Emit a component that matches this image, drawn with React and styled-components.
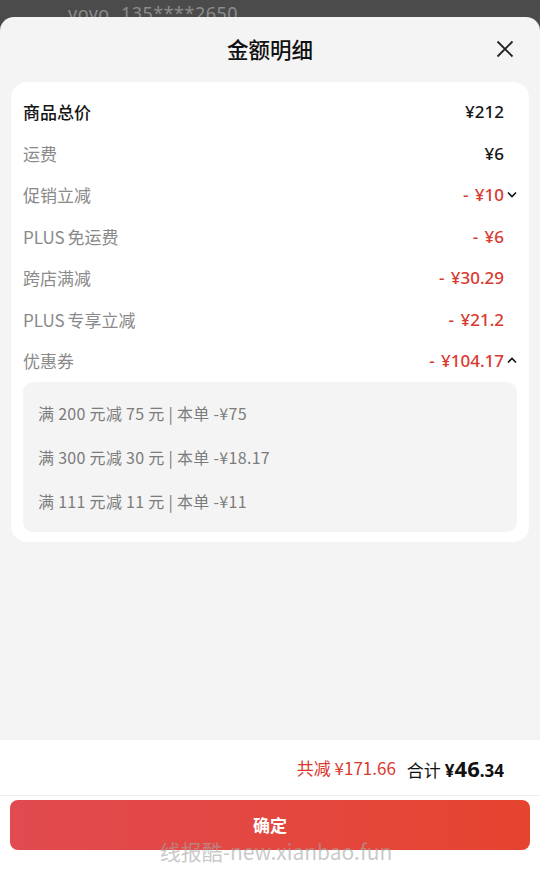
import React from "react";
import styled, { createGlobalStyle } from "styled-components";

const GlobalStyle = createGlobalStyle`
  html, body {
    margin: 0;
    padding: 0;
    background: #4b4b4b;
  }
  body {
    font-family: "Noto Sans", "Noto Sans CJK SC", sans-serif;
  }
`;

const RED = "#d83a2f";

const rows = [
  { label: "商品总价", value: "¥212", strong: true },
  { label: "运费", value: "¥6" },
  { label: "促销立减", value: "- ¥10", red: true, arrow: "down" },
  { label: "PLUS 免运费", value: "- ¥6", red: true },
  { label: "跨店满减", value: "- ¥30.29", red: true },
  { label: "PLUS 专享立减", value: "- ¥21.2", red: true },
  { label: "优惠券", value: "- ¥104.17", red: true, arrow: "up" },
];

const coupons = [
  "满 200 元减 75 元 | 本单 -¥75",
  "满 300 元减 30 元 | 本单 -¥18.17",
  "满 111 元减 11 元 | 本单 -¥11",
];

const Page = styled.div`
  height: 894px;
  display: flex;
  flex-direction: column;
  overflow: hidden;
`;

const Backdrop = styled.div`
  height: 17px;
  flex: 0 0 17px;
  overflow: hidden;
  padding: 2px 0 0 68px;
  box-sizing: border-box;
  color: #8c8c8c;
  font-size: 18px;
  line-height: 22px;
  letter-spacing: 0.5px;
  word-spacing: 6px;
`;

const Sheet = styled.div`
  flex: 1;
  background: #f4f4f4;
  border-radius: 14px 14px 0 0;
  display: flex;
  flex-direction: column;
`;

const Header = styled.div`
  position: relative;
  height: 65px;
  display: flex;
  align-items: center;
  justify-content: center;
  padding-bottom: 3px;
  box-sizing: border-box;
`;

const Title = styled.div`
  font-family: "Noto Sans CJK SC", sans-serif;
  font-size: 21.5px;
  font-weight: 500;
  color: #111;
`;

const Close = styled.button`
  position: absolute;
  right: 26px;
  top: 23px;
  width: 18px;
  height: 18px;
  padding: 0;
  border: none;
  background: none;
  display: flex;
`;

const Card = styled.div`
  margin: 0 11px;
  background: #fff;
  border-radius: 16px;
  padding: 9px 12px 10px;
`;

const Row = styled.div`
  height: 41.5px;
  display: flex;
  align-items: center;
  justify-content: space-between;
`;

const Label = styled.div`
  font-family: "Noto Sans CJK SC", sans-serif;
  font-size: 17px;
  color: ${(p) => (p.$strong ? "#141414" : "#8a8a8a")};
  font-weight: ${(p) => (p.$strong ? 500 : 400)};
  word-spacing: -1px;
`;

const ValueWrap = styled.div`
  display: flex;
  align-items: center;
`;

const Value = styled.div`
  font-family: "Noto Sans", "Noto Sans CJK SC", sans-serif;
  font-size: 17px;
  font-weight: 500;
  color: ${(p) => (p.$red ? RED : "#141414")};
  word-spacing: 2px;
`;

const ArrowSlot = styled.div`
  width: 13px;
  display: flex;
  justify-content: flex-end;
`;

const CouponBox = styled.div`
  background: #f4f4f4;
  border-radius: 10px;
  padding: 9px 15px;
`;

const CouponLine = styled.div`
  height: 44px;
  display: flex;
  align-items: center;
  font-family: "Noto Sans CJK SC", sans-serif;
  font-size: 16px;
  color: #7c7c7c;
  letter-spacing: 0.3px;
  white-space: pre;
`;

const Spacer = styled.div`
  flex: 1;
`;

const Footer = styled.div`
  position: relative;
  background: #fff;
  height: 154px;
  display: flex;
  flex-direction: column;
`;

const Summary = styled.div`
  height: 55px;
  border-bottom: 1px solid #eeeeee;
  display: flex;
  align-items: center;
  justify-content: flex-end;
  padding-right: 36px;
  gap: 11px;
  font-family: "Noto Sans CJK SC", sans-serif;
  font-size: 17px;
`;

const Saved = styled.span`
  color: ${RED};
`;

const Total = styled.span`
  color: #111;
  display: flex;
  align-items: baseline;
  gap: 4px;
`;

const Amount = styled.span`
  font-family: "Noto Sans", sans-serif;
  font-weight: 700;
  font-size: ${(p) => p.$size || 17}px;
`;

const ConfirmButton = styled.button`
  margin: 4px 10px 0;
  height: 50px;
  border: none;
  border-radius: 8px;
  background: linear-gradient(to right, #e14a50, #e5442f);
  color: #fff;
  font-family: "Noto Sans CJK SC", sans-serif;
  font-size: 17px;
  font-weight: 700;
  padding-bottom: 3px;
`;

const Watermark = styled.div`
  position: absolute;
  left: 0;
  right: 0;
  top: 96px;
  padding-left: 12px;
  text-align: center;
  font-family: "Noto Sans CJK SC", sans-serif;
  font-size: 21px;
  color: rgba(165, 165, 165, 0.6);
  pointer-events: none;
`;

const Chevron = ({ up }) => (
  <svg width="10" height="7" viewBox="0 0 10 7">
    <path
      d={up ? "M1 5.5 L5 1.5 L9 5.5" : "M1 1.5 L5 5.5 L9 1.5"}
      fill="none"
      stroke="#111"
      strokeWidth="1.6"
    />
  </svg>
);

export default function App() {
  return (
    <Page>
      <GlobalStyle />
      <Backdrop>vovo 135****2650</Backdrop>
      <Sheet>
        <Header>
          <Title>金额明细</Title>
          <Close>
            <svg width="18" height="18" viewBox="0 0 18 18">
              <path d="M1.5 1.5 L16.5 16.5 M16.5 1.5 L1.5 16.5" stroke="#222" strokeWidth="1.8" fill="none" />
            </svg>
          </Close>
        </Header>
        <Card>
          {rows.map((r) => (
            <Row key={r.label}>
              <Label $strong={r.strong}>{r.label}</Label>
              <ValueWrap>
                <Value $red={r.red}>{r.value}</Value>
                <ArrowSlot>{r.arrow && <Chevron up={r.arrow === "up"} />}</ArrowSlot>
              </ValueWrap>
            </Row>
          ))}
          <CouponBox>
            {coupons.map((c) => (
              <CouponLine key={c}>{c}</CouponLine>
            ))}
          </CouponBox>
        </Card>
        <Spacer />
        <Footer>
          <Summary>
            <Saved>共减 ¥171.66</Saved>
            <Total>
              合计
              <span>
                <Amount>¥</Amount>
                <Amount $size={22}>46</Amount>
                <Amount>.34</Amount>
              </span>
            </Total>
          </Summary>
          <ConfirmButton>确定</ConfirmButton>
          <Watermark>线报酷-new.xianbao.fun</Watermark>
        </Footer>
      </Sheet>
    </Page>
  );
}
